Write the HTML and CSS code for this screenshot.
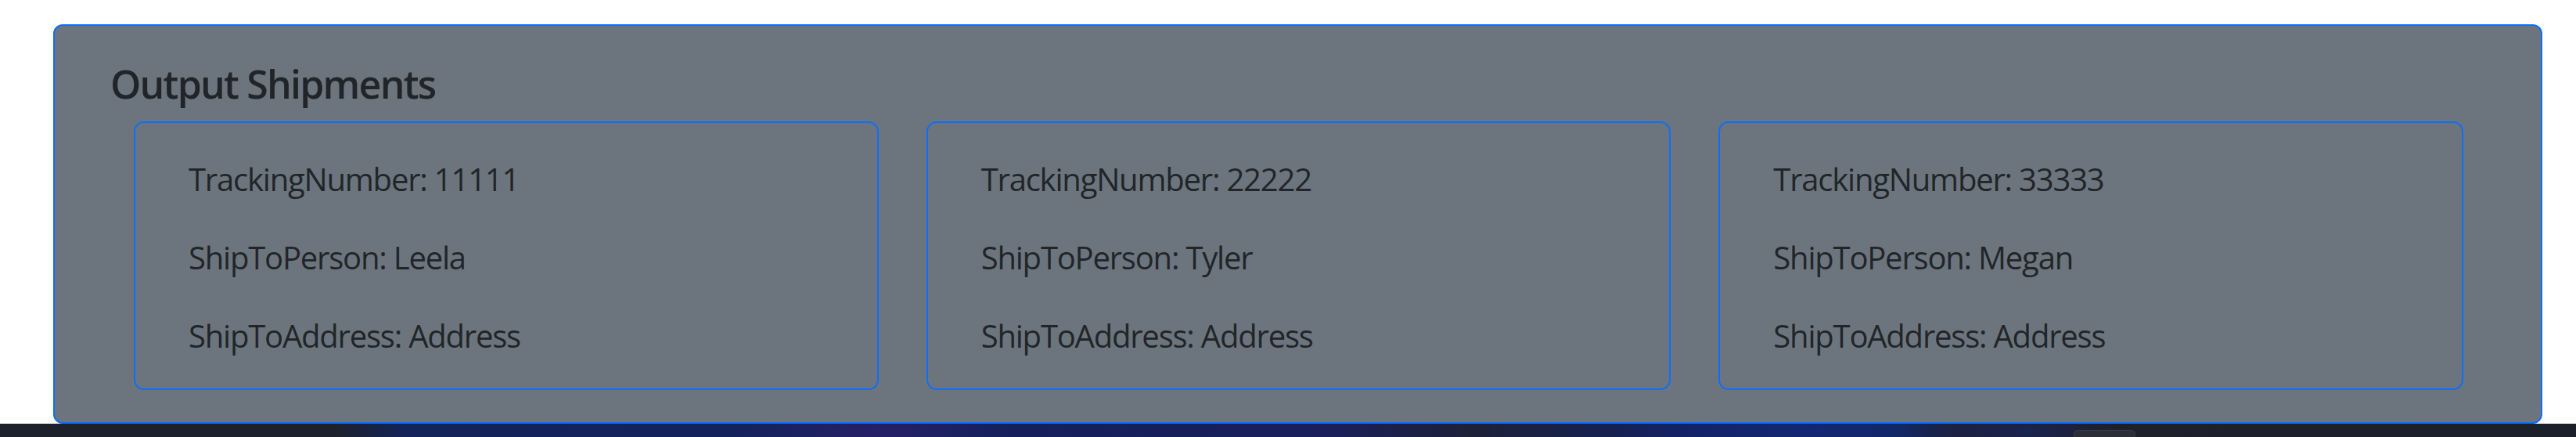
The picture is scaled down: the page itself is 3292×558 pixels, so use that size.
FILE: index.html
```html
<!DOCTYPE html>
<html lang="en">
<head>
<meta charset="utf-8">
<title>Output Shipments</title>
<link rel="stylesheet" href="styles.css">
</head>
<body>
<main class="page">
  <section class="panel">
    <h5 class="panel-title">Output Shipments</h5>
    <div class="shipments">
      <div class="shipment">
        <p>TrackingNumber: 11111</p>
        <p>ShipToPerson: Leela</p>
        <p>ShipToAddress: Address</p>
      </div>
      <div class="shipment">
        <p>TrackingNumber: 22222</p>
        <p>ShipToPerson: Tyler</p>
        <p>ShipToAddress: Address</p>
      </div>
      <div class="shipment">
        <p>TrackingNumber: 33333</p>
        <p>ShipToPerson: Megan</p>
        <p>ShipToAddress: Address</p>
      </div>
    </div>
  </section>
</main>
<footer class="footer-strip">
  <div class="footer-tab"></div>
</footer>
</body>
</html>
```
FILE: styles.css
```css
* { box-sizing: border-box; }

html, body {
  margin: 0;
  padding: 0;
  background: #ffffff;
  height: 558px;
  overflow: hidden;
}

body {
  font-family: "Open Sans", "Noto Sans", "Liberation Sans", sans-serif;
  color: #212529;
  display: flex;
  flex-direction: column;
}

.page {
  padding: 31px 43px 0 68px;
}

.panel {
  background: #6c757d;
  border: 2.5px solid #0d6efd;
  border-radius: 12px;
  padding: 44px 99px 40px 101px;
  height: 510px;
}

.panel-title {
  margin: 0 0 18px -30px;
  font-size: 50px;
  line-height: 60px;
  font-weight: 600;
  letter-spacing: -1.75px;
}

.shipments {
  display: grid;
  grid-template-columns: repeat(3, 1fr);
  column-gap: 61px;
}

.shipment {
  border: 2.5px solid #0d6efd;
  border-radius: 13px;
  padding: 42px 20px 0 68px;
  height: 343px;
}

.shipment p {
  margin: 0 0 40px;
  font-size: 40px;
  line-height: 60px;
  letter-spacing: -1.2px;
  white-space: nowrap;
}

.footer-strip {
  height: 17px;
  position: relative;
  background:
    radial-gradient(ellipse 180px 30px at 1120px 10px, rgba(60, 30, 120, 0.45), transparent),
    radial-gradient(ellipse 260px 40px at 2320px 10px, rgba(20, 40, 140, 0.55), transparent),
    radial-gradient(ellipse 120px 30px at 2590px 10px, rgba(20, 40, 130, 0.45), transparent),
    linear-gradient(90deg, #1c212c 0px, #1c212c 430px, #13245a 520px, #14205c 1300px, #1a1f5a 1700px, #1d2138 1880px, #13215e 2150px, #102656 2420px, #1e1f2a 2500px, #1c202a 3292px);
}

.footer-tab {
  position: absolute;
  left: 2650px;
  top: 8px;
  width: 79px;
  height: 12px;
  background: #2b2e36;
  border: 1px solid #3a3d46;
  border-bottom: none;
  border-radius: 6px 6px 0 0;
}
```
